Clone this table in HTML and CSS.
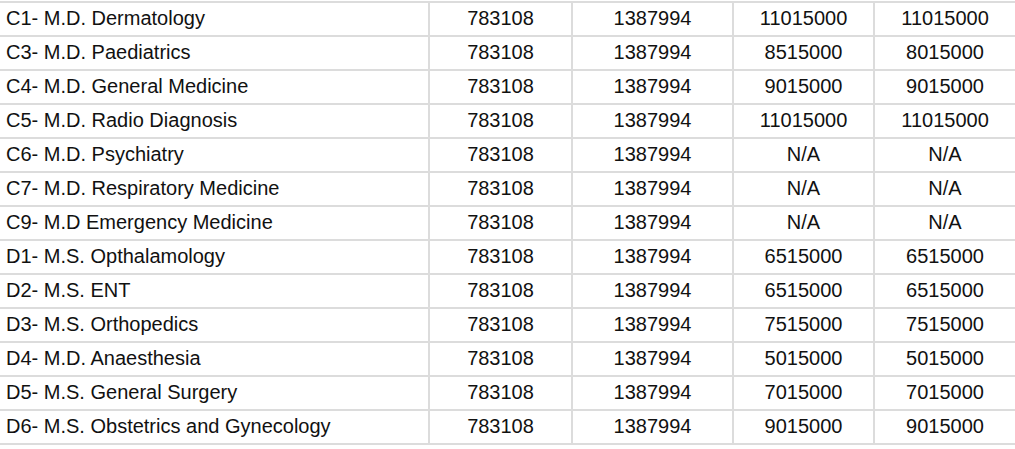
FILE: index.html
```html
<!DOCTYPE html>
<html>
<head>
<meta charset="utf-8">
<link rel="stylesheet" href="styles.css">
</head>
<body>
<table class="fees">
  <colgroup>
    <col class="c-name"><col class="c-a"><col class="c-b"><col class="c-c"><col class="c-d">
  </colgroup>
  <tbody>
    <tr><td>C1- M.D. Dermatology</td><td>783108</td><td>1387994</td><td>11015000</td><td>11015000</td></tr>
    <tr><td>C3- M.D. Paediatrics</td><td>783108</td><td>1387994</td><td>8515000</td><td>8015000</td></tr>
    <tr><td>C4- M.D. General Medicine</td><td>783108</td><td>1387994</td><td>9015000</td><td>9015000</td></tr>
    <tr><td>C5- M.D. Radio Diagnosis</td><td>783108</td><td>1387994</td><td>11015000</td><td>11015000</td></tr>
    <tr><td>C6- M.D. Psychiatry</td><td>783108</td><td>1387994</td><td>N/A</td><td>N/A</td></tr>
    <tr><td>C7- M.D. Respiratory Medicine</td><td>783108</td><td>1387994</td><td>N/A</td><td>N/A</td></tr>
    <tr><td>C9- M.D Emergency Medicine</td><td>783108</td><td>1387994</td><td>N/A</td><td>N/A</td></tr>
    <tr><td>D1- M.S. Opthalamology</td><td>783108</td><td>1387994</td><td>6515000</td><td>6515000</td></tr>
    <tr><td>D2- M.S. ENT</td><td>783108</td><td>1387994</td><td>6515000</td><td>6515000</td></tr>
    <tr><td>D3- M.S. Orthopedics</td><td>783108</td><td>1387994</td><td>7515000</td><td>7515000</td></tr>
    <tr><td>D4- M.D. Anaesthesia</td><td>783108</td><td>1387994</td><td>5015000</td><td>5015000</td></tr>
    <tr><td>D5- M.S. General Surgery</td><td>783108</td><td>1387994</td><td>7015000</td><td>7015000</td></tr>
    <tr><td>D6- M.S. Obstetrics and Gynecology</td><td>783108</td><td>1387994</td><td>9015000</td><td>9015000</td></tr>
  </tbody>
</table>
</body>
</html>
```
FILE: styles.css
```css
html, body {
  margin: 0;
  padding: 0;
  background: #ffffff;
}
body {
  padding-top: 1px;
  font-family: "Liberation Sans", Arial, sans-serif;
  color: #111111;
  overflow: hidden;
}
.fees {
  border-collapse: collapse;
  table-layout: fixed;
  width: 1017px;
  margin-left: -2px;
  font-size: 20px;
}
.c-name { width: 430px; }
.c-a { width: 143px; }
.c-b { width: 161px; }
.c-c { width: 141px; }
.c-d { width: 142px; }
.fees td {
  border: 2px solid #dcdcdc;
  padding: 0 6px 2px;
  text-align: center;
  vertical-align: middle;
  box-sizing: border-box;
  height: 34px;
  line-height: 28px;
  white-space: nowrap;
}
.fees td:first-child {
  text-align: left;
  padding-left: 6px;
}
```
